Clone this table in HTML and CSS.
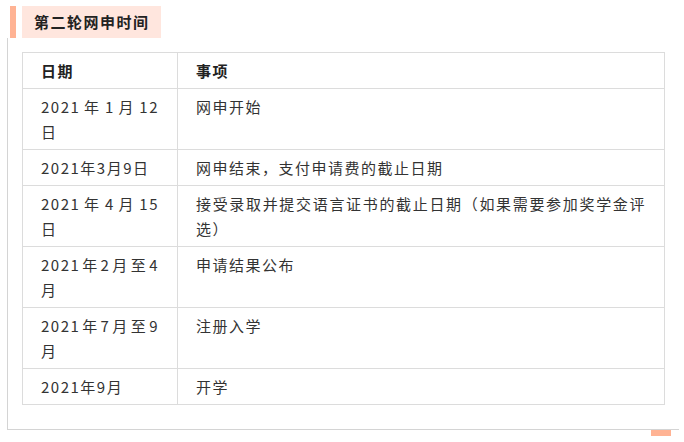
FILE: index.html
```html
<!DOCTYPE html>
<html lang="zh-CN">
<head>
<meta charset="utf-8">
<link rel="stylesheet" href="styles.css">
</head>
<body>
<div class="page">
  <div class="title-row">
    <span class="title-bar"></span>
    <h2 class="title">第二轮网申时间</h2>
  </div>
  <div class="panel">
    <table class="schedule">
      <colgroup><col class="c1"><col class="c2"></colgroup>
      <thead>
        <tr><th>日期</th><th>事项</th></tr>
      </thead>
      <tbody>
        <tr><td>2021 年 1 月 12 日</td><td>网申开始</td></tr>
        <tr><td>2021年3月9日</td><td>网申结束，支付申请费的截止日期</td></tr>
        <tr><td>2021 年 4 月 15 日</td><td>接受录取并提交语言证书的截止日期（如果需要参加奖学金评选）</td></tr>
        <tr><td>2021年2月至4月</td><td>申请结果公布</td></tr>
        <tr><td>2021年7月至9月</td><td>注册入学</td></tr>
        <tr><td>2021年9月</td><td>开学</td></tr>
      </tbody>
    </table>
  </div>
  <div class="foot-row"><span class="foot-bar"></span></div>
</div>
</body>
</html>
```

FILE: styles.css
```css
html, body {
  margin: 0;
  padding: 0;
  background: #fff;
}
body {
  font-family: "Noto Sans CJK SC", "Noto Sans", sans-serif;
  color: #333;
  font-size: 15px;
  letter-spacing: 1.5px;
}
.page {
  padding-top: 6px;
}
.title-row {
  display: flex;
  align-items: stretch;
  height: 32px;
  margin-left: 10px;
  gap: 6px;
}
.title-bar {
  width: 6px;
  background: #ffb394;
}
.title {
  margin: 0;
  width: 139px;
  box-sizing: border-box;
  padding-left: 12px;
  background: #ffe6de;
  font-size: 15px;
  font-weight: bold;
  color: #222;
  line-height: 32px;
}
.panel {
  margin-left: 7px;
  width: 672px;
  box-sizing: border-box;
  border-left: 1px solid #d4d4d4;
  border-bottom: 1px solid #d4d4d4;
  padding: 14px 0 24px 14px;
}
.schedule {
  width: 643px;
  table-layout: fixed;
  border-collapse: collapse;
}
.c1 { width: 155px; }
.schedule th,
.schedule td {
  border: 1px solid #dcdcdc;
  padding: 5px 18px 5px 18px;
  line-height: 25px;
  text-align: justify;
  word-spacing: -2px;
  vertical-align: top;
  font-size: 15px;
}
.schedule th {
  font-weight: bold;
  color: #222;
  text-align: left;
}
.foot-row {
  display: flex;
  justify-content: flex-end;
  width: 679px;
}
.foot-bar {
  width: 20px;
  height: 6px;
  margin-right: 8px;
  background: #ffb394;
}
```
